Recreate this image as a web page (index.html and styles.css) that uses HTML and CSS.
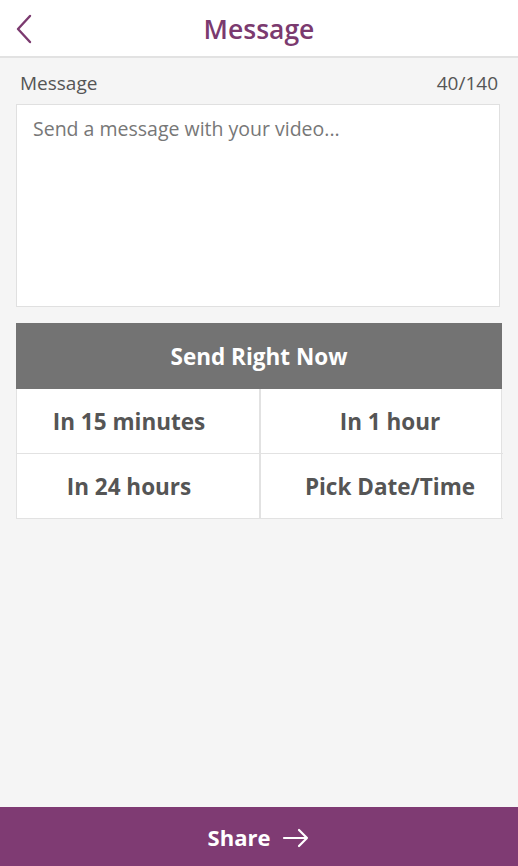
FILE: index.html
```html
<!DOCTYPE html>
<html>
<head>
<meta charset="utf-8">
<link rel="stylesheet" href="styles.css">
</head>
<body>
<div class="app">
  <header class="header">
    <svg class="back" width="18" height="30" viewBox="0 0 18 30"><polyline points="15,2 3,15 15,28" fill="none" stroke="#7b3a6f" stroke-width="2.4" stroke-linecap="round" stroke-linejoin="round"/></svg>
    <h1 class="title">Message</h1>
  </header>
  <main class="content">
    <div class="label-row">
      <span>Message</span>
      <span>40/140</span>
    </div>
    <div class="textbox">Send a message with your video...</div>
    <div class="options">
      <div class="now">Send Right Now</div>
      <div class="grid">
        <div class="cell left">In 15 minutes</div>
        <div class="cell right">In 1 hour</div>
        <div class="cell left">In 24 hours</div>
        <div class="cell right">Pick Date/Time</div>
      </div>
    </div>
  </main>
  <footer class="footer">
    <span>Share</span>
    <svg class="arrow" width="28" height="20" viewBox="0 0 28 20"><path d="M2 10 H25 M17 2 L25 10 L17 18" fill="none" stroke="#fff" stroke-width="2.2" stroke-linecap="round" stroke-linejoin="round"/></svg>
  </footer>
</div>
</body>
</html>
```

FILE: styles.css
```css
html, body {
  margin: 0;
  padding: 0;
}
body {
  font-family: "Open Sans", "Noto Sans", sans-serif;
  background: #f5f5f5;
}
.app {
  width: 518px;
  height: 866px;
  display: flex;
  flex-direction: column;
  background: #f5f5f5;
}
.header {
  height: 56px;
  background: #fff;
  border-bottom: 2px solid #e2e2e2;
  display: flex;
  align-items: center;
  justify-content: center;
  position: relative;
}
.back {
  position: absolute;
  left: 15px;
  top: 14px;
}
.title {
  margin: 0;
  font-size: 26.5px;
  font-weight: 600;
  color: #7b3a6f;
  margin-top: 2px;
}
.content {
  flex: 1;
  padding: 12px 16px 0 16px;
  display: flex;
  flex-direction: column;
}
.label-row {
  display: flex;
  justify-content: space-between;
  font-size: 19px;
  color: #555;
  padding: 0 4px 0 4px;
  height: 26px;
  line-height: 26px;
  margin-bottom: 8px;
}
.textbox {
  margin-right: 2px;
  height: 190px;
  background: #fff;
  border: 1px solid #e0e0e0;
  padding: 11px 16px 0 16px;
  font-size: 19.5px;
  line-height: 26px;
  color: #777;
}
.options {
  margin-top: 16px;
  display: flex;
  flex-direction: column;
}
.now {
  height: 66px;
  background: #737373;
  color: #fff;
  font-weight: 700;
  font-size: 22.5px;
  display: flex;
  align-items: center;
  justify-content: center;
}
.grid {
  display: grid;
  grid-template-columns: 244px 242px;
  background: #fff;
  border-left: 1px solid #e2e2e2;
  border-right: 1px solid #e2e2e2;
}
.cell {
  height: 65px;
  display: flex;
  align-items: center;
  justify-content: center;
  font-size: 22.5px;
  font-weight: 700;
  color: #555;
  border-bottom: 1px solid #e2e2e2;
  box-sizing: border-box;
}
.cell.left {
  padding-right: 18px;
  border-right: 2px solid #e2e2e2;
}
.cell.right {
  padding-left: 16px;
}
.footer {
  height: 59px;
  background: #7f3b73;
  color: #fff;
  display: flex;
  align-items: center;
  justify-content: center;
  gap: 12px;
  font-size: 22px;
  font-weight: 700;
  padding-right: 0;
}
.arrow {
  margin-top: 2px;
}
```
